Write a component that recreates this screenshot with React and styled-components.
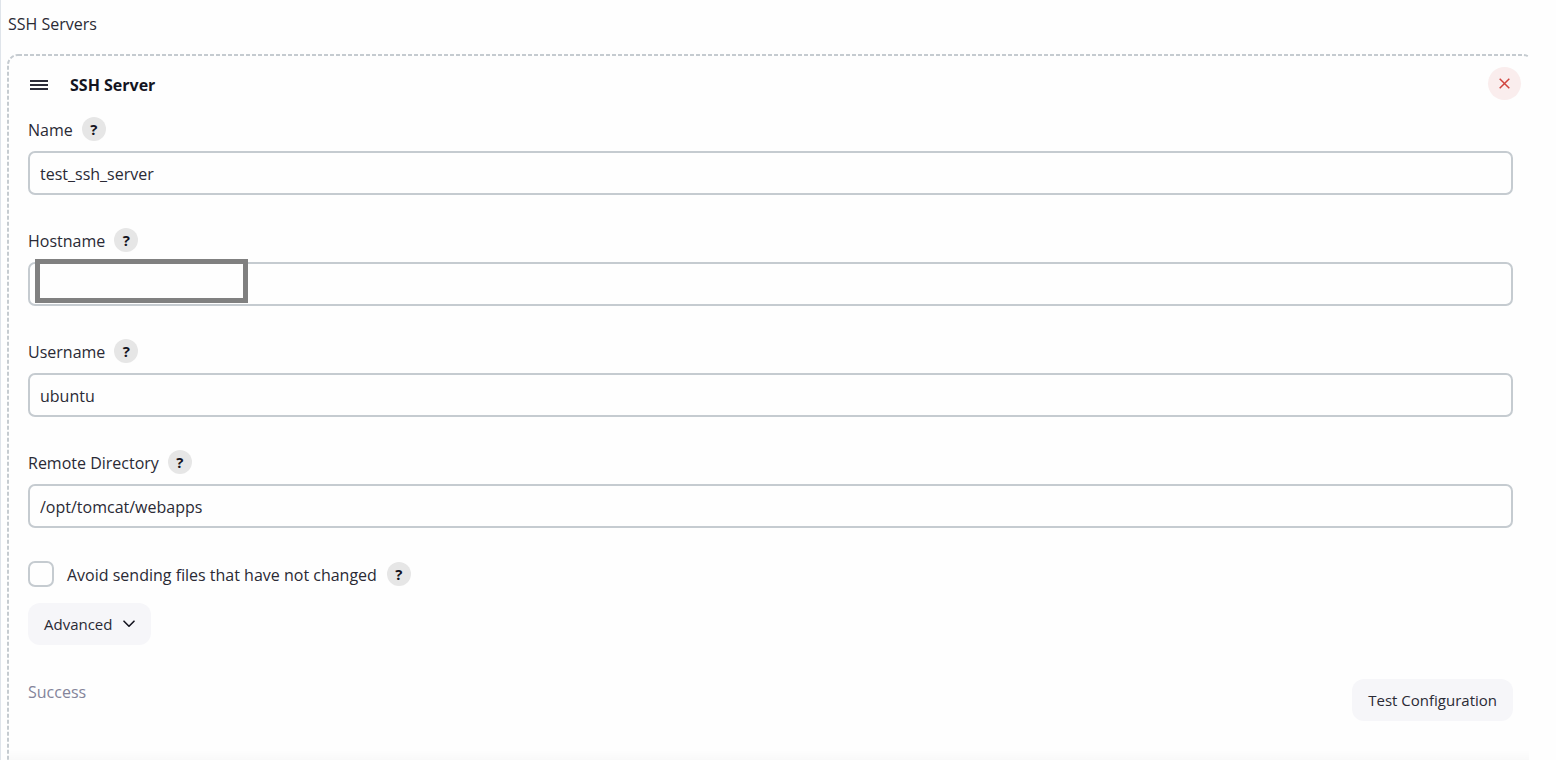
import React from "react";
import styled, { createGlobalStyle } from "styled-components";

const GlobalStyle = createGlobalStyle`
  *, *::before, *::after { box-sizing: border-box; }
  body {
    margin: 0;
    background: #fefefe;
    color: #2a2a35;
    font-family: "Open Sans", "Noto Sans", sans-serif;
    font-size: 16px;
    line-height: 24px;
  }
  button, input { font: inherit; color: inherit; }
`;

const Page = styled.main`
  position: relative;
  display: flex;
  flex-direction: column;
  height: 100vh;
  padding: 12px 27px 0 6px;
  border-left: 1px solid #dfe4ea;
  overflow: hidden;
`;

const EdgeMark = styled.span`
  position: absolute;
  top: 379px;
  left: -1px;
  width: 1px;
  height: 12px;
  background: #000;
`;

const PageTitle = styled.h1`
  margin: 0 0 18px 1px;
  font-size: 16px;
  font-weight: 400;
  line-height: 24px;
`;

const Clip = styled.div`
  position: relative;
  flex: 1;
  min-height: 0;
  overflow: hidden;
`;

const Card = styled.section`
  position: relative;
  margin-right: -5px;
  height: 100%;
  padding: 2px 2px 0;
`;

const DashedOutline = styled.svg`
  position: absolute;
  inset: 0;
  width: 100%;
  height: 100%;
  pointer-events: none;

  rect {
    width: calc(100% - 2px);
    height: calc(100% + 20px);
    fill: none;
    stroke: #c5cbd0;
    stroke-width: 2px;
    stroke-dasharray: 4 2;
  }
`;

const CardHeader = styled.header`
  display: flex;
  align-items: center;
  gap: 22px;
  padding: 11px 11px 0 21px;
`;

const CardTitle = styled.h2`
  flex: 1;
  margin: 0;
  padding-top: 3px;
  font-size: 16px;
  font-weight: 700;
  line-height: 24px;
  color: #14141f;
`;

const DragHandle = styled.button`
  display: flex;
  padding: 2px 0 0;
  border: 0;
  background: none;
`;

const CloseButton = styled.button`
  display: grid;
  place-items: center;
  width: 33px;
  height: 33px;
  padding: 0;
  border: 0;
  border-radius: 50%;
  background: #faeded;
  color: #d0443e;
`;

const Form = styled.form`
  display: flex;
  flex-direction: column;
  padding: 17px 19px 0;
`;

const Field = styled.div`
  position: relative;
  margin-bottom: 33px;
`;

const FieldLabel = styled.label`
  padding-top: 1px;
`;

const LabelRow = styled.div`
  display: flex;
  align-items: center;
  gap: 9px;
  height: 24px;
  margin-bottom: 10px;
`;

const Help = styled.button`
  display: grid;
  place-items: center;
  width: 24px;
  height: 24px;
  padding: 0;
  border: 0;
  border-radius: 50%;
  background: #e6e6e6;
  color: #14141f;
  font-size: 15px;
  font-weight: 700;
  line-height: 24px;
`;

const TextInput = styled.input`
  display: block;
  width: 100%;
  height: 44px;
  padding: 2px 10px 0;
  border: 2px solid #c5cbd0;
  border-radius: 7px;
  background: #fefefe;
  outline: 0;
`;

const Redaction = styled.span`
  position: absolute;
  top: 31px;
  left: 7px;
  width: 213px;
  height: 44px;
  border: 5px solid #808080;
  background: #fefefe;
`;

const CheckRow = styled.div`
  display: flex;
  align-items: center;
  gap: 10px;
  margin-bottom: 16px;
`;

const Checkbox = styled.input`
  appearance: none;
  width: 26px;
  height: 26px;
  margin: 0 3px 0 0;
  border: 2px solid #c5cbd0;
  border-radius: 7px;
  background: #fefefe;
`;

const SoftButton = styled.button`
  display: inline-flex;
  align-items: center;
  align-self: flex-start;
  gap: 11px;
  height: 42px;
  padding: 0 16px;
  border: 0;
  border-radius: 12px;
  background: #f6f6f9;
  font-size: 15px;
`;

const Footer = styled.div`
  display: flex;
  align-items: flex-start;
  justify-content: space-between;
  margin-top: 34px;
`;

const Status = styled.output`
  padding-top: 1px;
  color: #84849a;
`;

const BottomShade = styled.div`
  position: absolute;
  right: 0;
  bottom: 0;
  left: 2px;
  height: 10px;
  background: linear-gradient(rgba(0, 0, 0, 0), rgba(0, 0, 0, 0.02));
  pointer-events: none;
`;

const FIELDS = [
  { id: "name", label: "Name", value: "test_ssh_server" },
  { id: "hostname", label: "Hostname", value: "", redacted: true },
  { id: "username", label: "Username", value: "ubuntu" },
  { id: "remote", label: "Remote Directory", value: "/opt/tomcat/webapps" },
];

function HelpButton({ topic }) {
  return <Help type="button" aria-label={`Help for ${topic}`}>?</Help>;
}

export default function App() {
  return (
    <>
      <GlobalStyle />
      <Page>
        <EdgeMark />
        <PageTitle>SSH Servers</PageTitle>
        <Clip>
          <Card>
            <DashedOutline aria-hidden="true">
              <rect x="1" y="1" rx="10" />
            </DashedOutline>
            <CardHeader>
              <DragHandle type="button" aria-label="Reorder">
                <svg width="18" height="12" viewBox="0 0 18 12" stroke="#2b2b38" strokeWidth="2">
                  <path d="M0 2h18M0 6h18M0 10h18" />
                </svg>
              </DragHandle>
              <CardTitle>SSH Server</CardTitle>
              <CloseButton type="button" aria-label="Remove">
                <svg width="11" height="11" viewBox="0 0 11 11" stroke="currentColor" strokeWidth="1.5">
                  <path d="M.7.7l9.6 9.6M10.3.7L.7 10.3" />
                </svg>
              </CloseButton>
            </CardHeader>
            <Form>
              {FIELDS.map((f) => (
                <Field key={f.id}>
                  <LabelRow>
                    <FieldLabel htmlFor={f.id}>{f.label}</FieldLabel>
                    <HelpButton topic={f.label} />
                  </LabelRow>
                  <TextInput id={f.id} type="text" defaultValue={f.value} spellCheck={false} />
                  {f.redacted && <Redaction />}
                </Field>
              ))}
              <CheckRow>
                <Checkbox id="avoid" type="checkbox" />
                <FieldLabel htmlFor="avoid">Avoid sending files that have not changed</FieldLabel>
                <HelpButton topic="unchanged files" />
              </CheckRow>
              <SoftButton type="button">
                Advanced
                <svg width="12" height="8" viewBox="0 0 12 8" fill="none" stroke="#14141f" strokeWidth="1.6" strokeLinecap="round" strokeLinejoin="round">
                  <path d="M1 1.2l5 5 5-5" />
                </svg>
              </SoftButton>
              <Footer>
                <Status>Success</Status>
                <SoftButton type="button">Test Configuration</SoftButton>
              </Footer>
            </Form>
          </Card>
          <BottomShade />
        </Clip>
      </Page>
    </>
  );
}
